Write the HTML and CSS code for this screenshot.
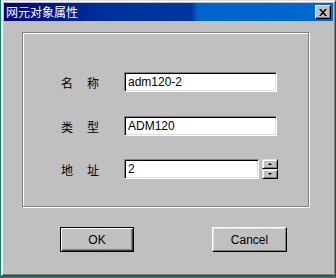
FILE: index.html
```html
<!DOCTYPE html>
<html lang="zh-CN">
<head>
    <meta charset="UTF-8">
    <title>网元对象属性</title>
    <link rel="stylesheet" href="styles.css">
</head>
<body>
    <div class="window">
        <div class="titlebar">
            <span class="title">网元对象属性</span>
            <button class="close-btn">
                <svg width="8" height="7" viewBox="0 0 8 7">
                    <path d="M0 0h2l2 2.5L6 0h2L5 3.5 8 7H6L4 4.5 2 7H0l3-3.5z" fill="#000"/>
                </svg>
            </button>
        </div>

        <div class="client">
            <div class="groupbox">
                <div class="row">
                    <span class="label"><span>名</span><span>称</span></span>
                    <div class="field wide">adm120-2</div>
                </div>
                <div class="row">
                    <span class="label"><span>类</span><span>型</span></span>
                    <div class="field wide">ADM120</div>
                </div>
                <div class="row">
                    <span class="label"><span>地</span><span>址</span></span>
                    <div class="field short">2</div>
                    <div class="spinner">
                        <div class="spin-btn"><span class="arrow-up"></span></div>
                        <div class="spin-btn"><span class="arrow-down"></span></div>
                    </div>
                </div>
            </div>

            <div class="buttons">
                <button class="button default">OK</button>
                <button class="button">Cancel</button>
            </div>
        </div>
    </div>
</body>
</html>
```

FILE: styles.css
```css
* {
    margin: 0;
    padding: 0;
    box-sizing: border-box;
}
body {
    width: 336px;
    height: 278px;
    background-color: #1b7873;
    font-family: "Liberation Sans", "Noto Sans CJK SC", sans-serif;
    font-size: 12px;
    overflow: hidden;
}
.window {
    width: 335px;
    height: 276px;
    margin-left: 1px;
    background-color: #c0c0c0;
    border-top: 1px solid #dfdfdf;
    border-left: 1px solid #dfdfdf;
    border-right: 1px solid #404040;
    border-bottom: 1px solid #404040;
    padding: 2px;
    box-shadow: inset 1px 1px 0 #ffffff, inset -1px -1px 0 #808080;
    display: flex;
    flex-direction: column;
}
.titlebar {
    height: 18px;
    display: flex;
    align-items: center;
    justify-content: space-between;
    background: linear-gradient(to right, #000a78 0%, #001a88 17%, #00309a 30%, #0038a0 57%, #0064cc 59%, #0068d0 100%);
    padding-left: 2px;
    padding-right: 2px;
}
.title {
    color: white;
    font-family: "Noto Sans CJK SC", sans-serif;
    font-size: 12px;
    line-height: 18px;
}
.close-btn {
    width: 16px;
    height: 14px;
    background-color: #c0c0c0;
    border-top: 1px solid #ffffff;
    border-left: 1px solid #ffffff;
    border-right: 1px solid #000000;
    border-bottom: 1px solid #000000;
    box-shadow: inset -1px -1px 0 #808080;
    display: flex;
    align-items: center;
    justify-content: center;
}
.client {
    flex: 1;
    padding-top: 11px;
    padding-left: 18px;
}
.groupbox {
    width: 287px;
    height: 175px;
    border: 1px solid #808080;
    box-shadow: inset 1px 1px 0 #ffffff, 1px 1px 0 #ffffff;
    padding-top: 39px;
    padding-left: 38px;
    display: flex;
    flex-direction: column;
    gap: 24px;
}
.row {
    display: flex;
    align-items: center;
    height: 20px;
}
.row:nth-child(3) {
    margin-top: -1px;
}
.label {
    width: 63px;
    display: flex;
    gap: 14px;
    font-family: "Noto Sans CJK SC", sans-serif;
    font-size: 12px;
    color: #000;
}
.field {
    height: 20px;
    background-color: white;
    border-top: 1px solid #808080;
    border-left: 1px solid #808080;
    border-right: 1px solid #ffffff;
    border-bottom: 1px solid #ffffff;
    box-shadow: inset 1px 1px 0 #000000, inset -1px -1px 0 #dfdfdf;
    padding-left: 3px;
    line-height: 18px;
    color: #000;
}
.wide {
    width: 153px;
}
.short {
    width: 135px;
}
.spinner {
    margin-left: 3px;
    width: 16px;
    height: 20px;
    display: flex;
    flex-direction: column;
}
.spin-btn {
    height: 10px;
    background-color: #c0c0c0;
    border-top: 1px solid #dfdfdf;
    border-left: 1px solid #dfdfdf;
    border-right: 1px solid #000000;
    border-bottom: 1px solid #000000;
    box-shadow: inset 1px 1px 0 #ffffff, inset -1px -1px 0 #808080;
    display: flex;
    align-items: center;
    justify-content: center;
}
.arrow-up {
    width: 0;
    height: 0;
    border-left: 2px solid transparent;
    border-right: 2px solid transparent;
    border-bottom: 2px solid #000;
}
.arrow-down {
    width: 0;
    height: 0;
    border-left: 2px solid transparent;
    border-right: 2px solid transparent;
    border-top: 2px solid #000;
}
.buttons {
    display: flex;
    gap: 78px;
    margin-top: 20px;
    padding-left: 38px;
}
.button {
    width: 75px;
    height: 25px;
    background-color: #c0c0c0;
    font-family: "Liberation Sans", sans-serif;
    font-size: 12px;
    color: #000;
    border-top: 1px solid #ffffff;
    border-left: 1px solid #ffffff;
    border-right: 1px solid #000000;
    border-bottom: 1px solid #000000;
    box-shadow: inset -1px -1px 0 #808080, inset 1px 1px 0 #dfdfdf;
}
.button.default {
    width: 74px;
    border: 1px solid #000000;
    box-shadow: inset 1px 1px 0 #ffffff, inset -1px -1px 0 #404040, inset -2px -2px 0 #808080;
}
```
